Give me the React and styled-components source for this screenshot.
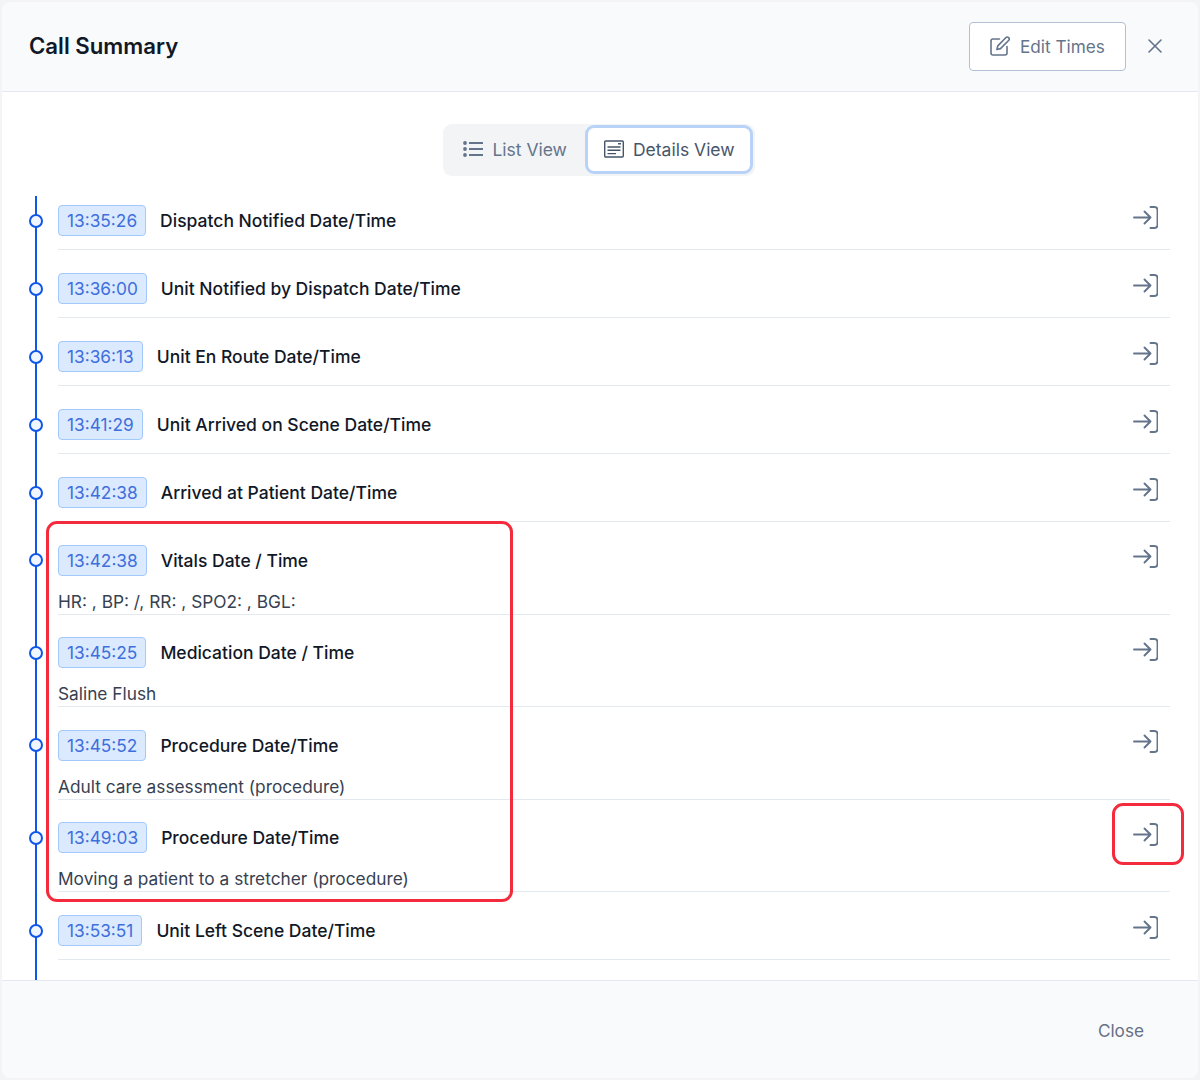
import styled, { createGlobalStyle } from 'styled-components';
import { X } from 'lucide-react';

const GlobalStyle = createGlobalStyle`
  html, body {
    margin: 0;
    padding: 0;
    background: #f4f3f6;
    font-family: Inter, "Liberation Sans", sans-serif;
  }
`

const Page = styled.div`
  position: relative;
  width: 1200px;
  height: 1080px;
  padding: 2px;
  box-sizing: border-box;
`

const Modal = styled.div`
  display: flex;
  flex-direction: column;
  height: 100%;
  background: #fff;
  border-radius: 8px;
  overflow: hidden;
`

const Header = styled.header`
  display: flex;
  align-items: center;
  height: 90px;
  box-sizing: border-box;
  padding: 0 31px 1px 27px;
  background: #f9fafc;
  border-bottom: 1px solid #e4e8f0;
`

const Title = styled.h1`
  flex: 1;
  margin: 0 0 2px;
  font-size: 22.2px;
  font-weight: 600;
  color: #111827;
`

const EditButton = styled.button`
  display: flex;
  align-items: center;
  gap: 10px;
  width: 157px;
  height: 49px;
  box-sizing: border-box;
  padding: 0 0 0 20px;
  background: #fff;
  border: 1px solid #b3bfd3;
  border-radius: 4px;
  font: 400 17.2px Inter, sans-serif;
  color: #64748b;
`

const CloseIcon = styled(X)`
  margin-left: 17px;
  color: #64748b;
`

const Body = styled.main`
  flex: 1;
  display: flex;
  flex-direction: column;
  min-height: 0;
  overflow: hidden;
`

const ToggleWrap = styled.div`
  display: flex;
  justify-content: center;
  padding: 32px 2px 20px 0;
`

const Toggle = styled.div`
  display: flex;
  align-items: center;
  height: 52px;
  box-sizing: border-box;
  padding: 0 2px 2px 0;
  background: #f3f4f6;
  border-radius: 9px;
`

const ToggleButton = styled.button`
  display: flex;
  align-items: center;
  gap: 9px;
  height: ${({ $active }) => ($active ? '49px' : '46px')};
  box-sizing: border-box;
  padding: ${({ $active }) => ($active ? '0 15px 0 16px' : '0 18px 0 20px')};
  background: ${({ $active }) => ($active ? '#fff' : 'transparent')};
  border: ${({ $active }) => ($active ? '3px solid #b8d3f7' : 'none')};
  border-radius: 9px;
  font: 400 17.5px Inter, sans-serif;
  color: ${({ $active }) => ($active ? '#475569' : '#64748b')};
`

const List = styled.div`
  position: relative;
  flex: 1;
  padding: 0 28px 0 56px;

  &::before {
    content: '';
    position: absolute;
    left: 32.5px;
    top: 0;
    bottom: 0;
    width: 2px;
    background: #0f57e8;
  }
`

const Row = styled.div`
  padding-top: ${({ $note }) => ($note ? '22.8px' : '23px')};
  padding-bottom: ${({ $note }) => ($note ? '0' : '13px')};
  border-bottom: 1px solid #e4e8f0;
  box-sizing: border-box;
  height: ${({ $note }) => ($note ? '92.5px' : '68px')};

  &:first-child {
    padding-top: 9px;
    height: 54px;
  }
`

const RowHead = styled.div`
  position: relative;
  display: flex;
  align-items: center;
  gap: 14px;
  height: 31px;
`

const Dot = styled.span`
  position: absolute;
  left: -29px;
  top: 8.5px;
  width: 14px;
  height: 14px;
  box-sizing: border-box;
  background: #f0f6ff;
  border: 2.5px solid #0f57e8;
  border-radius: 50%;
`

const TimeBadge = styled.span`
  display: inline-flex;
  align-items: center;
  height: 31px;
  box-sizing: border-box;
  padding: 0 8px;
  background: #dbeafe;
  border: 1px solid #a3c9fb;
  border-radius: 4px;
  font-size: 17.3px;
  color: #3f6fdc;
`

const RowTitle = styled.span`
  flex: 1;
  font-size: 17.5px;
  font-weight: 500;
  color: #111827;
`

const RowLink = styled.span`
  display: flex;
  margin: -7px 12px 0 0;
  color: #64748b;
`

const Note = styled.div`
  margin-top: 15px;
  font-size: 17.3px;
  line-height: 21px;
  color: #374151;
`

const Footer = styled.footer`
  display: flex;
  align-items: center;
  justify-content: flex-end;
  height: 98px;
  box-sizing: border-box;
  padding: 2px 54px 0 0;
  background: #f9fafc;
  border-top: 1px solid #e4e8f0;
  font-size: 17.2px;
  color: #667085;
`

const Highlight = styled.div`
  position: absolute;
  left: ${({ $x }) => $x}px;
  top: ${({ $y }) => $y}px;
  width: ${({ $w }) => $w}px;
  height: ${({ $h }) => $h}px;
  box-sizing: border-box;
  border: 3.5px solid #f32b3c;
  border-radius: 11px;
  pointer-events: none;
`

const EditIcon = () => (
  <svg width="20" height="20" viewBox="0 0 20 20" fill="none" stroke="currentColor" strokeWidth="1.6" strokeLinecap="round" strokeLinejoin="round">
    <path d="M9.5 3H3a2 2 0 0 0-2 2v12a2 2 0 0 0 2 2h12a2 2 0 0 0 2-2v-6.5" />
    <path d="M16 1.5a2 2 0 0 1 2.8 2.8L10.5 12.6l-3.6.9.9-3.6z" />
  </svg>
)

const ListIcon = () => (
  <svg width="20" height="18" viewBox="0 0 20 18" fill="none" stroke="currentColor" strokeWidth="1.8">
    <path d="M6 3h14M6 9h14M6 15h14" />
    <circle cx="2" cy="3" r="1.9" fill="currentColor" stroke="none" />
    <circle cx="2" cy="9" r="1.9" fill="currentColor" stroke="none" />
    <circle cx="2" cy="15" r="1.9" fill="currentColor" stroke="none" />
  </svg>
)

const DetailsIcon = () => (
  <svg width="20" height="18" viewBox="0 0 20 18" fill="none" stroke="currentColor" strokeWidth="1.4">
    <rect x="0.7" y="1" width="18.6" height="16" rx="1" />
    <path d="M14 3.7h3M3.5 7h13M3.5 10.3h13M3.5 13.6h8.5" />
  </svg>
)

const LinkIcon = () => (
  <svg width="26" height="23" viewBox="0 0 26 23" fill="none" stroke="currentColor" strokeWidth="1.9" strokeLinecap="round" strokeLinejoin="round">
    <path d="M2 11.5h16.5M12.5 5.5l6 6-6 6" />
    <path d="M18.5 1h4a3 3 0 0 1 3 3v15a3 3 0 0 1-3 3h-4" />
  </svg>
)

const rows = [
  { time: '13:35:26', title: 'Dispatch Notified Date/Time' },
  { time: '13:36:00', title: 'Unit Notified by Dispatch Date/Time' },
  { time: '13:36:13', title: 'Unit En Route Date/Time' },
  { time: '13:41:29', title: 'Unit Arrived on Scene Date/Time' },
  { time: '13:42:38', title: 'Arrived at Patient Date/Time' },
  { time: '13:42:38', title: 'Vitals Date / Time', note: 'HR: , BP: /, RR: , SPO2: , BGL:' },
  { time: '13:45:25', title: 'Medication Date / Time', note: 'Saline Flush' },
  { time: '13:45:52', title: 'Procedure Date/Time', note: 'Adult care assessment (procedure)' },
  { time: '13:49:03', title: 'Procedure Date/Time', note: 'Moving a patient to a stretcher (procedure)' },
  { time: '13:53:51', title: 'Unit Left Scene Date/Time' },
]

const App = () => {
  return (
    <Page>
      <GlobalStyle />
      <Modal>
        <Header>
          <Title>Call Summary</Title>
          <EditButton type='button'>
            <EditIcon />
            Edit Times
          </EditButton>
          <CloseIcon size={24} strokeWidth={1.6} />
        </Header>
        <Body>
          <ToggleWrap>
            <Toggle>
              <ToggleButton type='button'>
                <ListIcon />
                List View
              </ToggleButton>
              <ToggleButton type='button' $active>
                <DetailsIcon />
                Details View
              </ToggleButton>
            </Toggle>
          </ToggleWrap>
          <List>
            {rows.map((row, index) => (
              <Row key={index} $note={!!row.note}>
                <RowHead>
                  <Dot />
                  <TimeBadge>{row.time}</TimeBadge>
                  <RowTitle>{row.title}</RowTitle>
                  <RowLink><LinkIcon /></RowLink>
                </RowHead>
                {row.note && <Note>{row.note}</Note>}
              </Row>
            ))}
          </List>
        </Body>
        <Footer>Close</Footer>
      </Modal>
      <Highlight $x={46} $y={521} $w={467} $h={381} />
      <Highlight $x={1112} $y={803} $w={72} $h={62} />
    </Page>
  );
}

export default App;
